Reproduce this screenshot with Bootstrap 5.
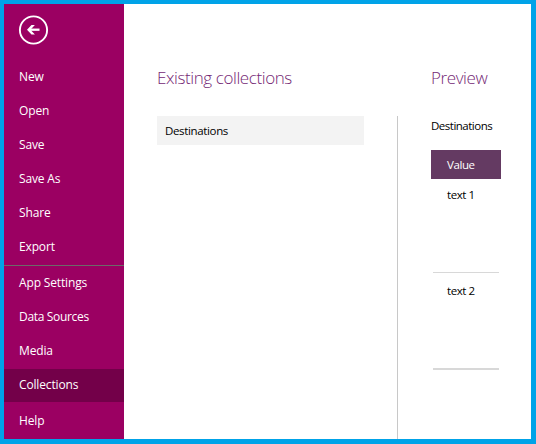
<!DOCTYPE html>
<html lang="en">
<head>
<meta charset="utf-8">
<meta name="viewport" content="width=device-width, initial-scale=1">
<title>Collections</title>
<link href="https://cdn.jsdelivr.net/npm/bootstrap@5.3.0/dist/css/bootstrap.min.css" rel="stylesheet">
<style>
body { font-family: "Open Sans", "Noto Sans", sans-serif; font-size: 12px; line-height: 18px; color: #000; }
.app-frame { height: 444px; border: solid #00a3e8; border-width: 4px 5px 5px 4px; overflow: hidden; }
.side-menu { width: 120px; background: #9b0062; padding-top: 10px; }
.back-btn { margin: 0 0 14px 14px; line-height: 0; width: 32px; height: 32px; }
.side-menu .nav-link { height: 34px; padding: 8px 0 8px 15px; color: #fff; letter-spacing: -.15px; white-space: nowrap; }
.side-menu .nav-link.active { height: 33px; margin: 1px 0 2px; padding-top: 7px; background: #730049; }
.side-menu .nav-link.tight { letter-spacing: -.32px; }
.menu-rule { height: 1px; margin-top: 1px; background: #6c6a68; }
.list-pane { width: 240px; padding: 64px 0 0 33px; }
.preview-pane { width: 100px; padding-top: 64px; }
.pane-title { font-size: 17px; font-weight: 300; line-height: 20px; color: #742774; margin: 0 0 28px; white-space: nowrap; letter-spacing: -.41px; }
.collection-item { height: 29px; padding: 6px 8px 5px; background: #f3f3f3; font-size: 11.5px; letter-spacing: -.35px; }
.pane-rule { width: 1px; margin: 112px 0 0 33px; background: #c8c8c8; }
.preview-title { font-size: 11.5px; margin: 29px 0 15px; letter-spacing: -.5px; }
.value-head { width: 70px; height: 29px; padding: 6px 16px 5px; background: #643a62; color: #fff; font-size: 11.5px; letter-spacing: -.4px; }
.value-row { width: 66px; margin-left: 2px; padding: 7px 0 0 14px; font-size: 11.5px; letter-spacing: -.45px; border-bottom: 1px solid #d8d8d8; }
.row-one { height: 94px; }
.row-two { height: 97px; padding-top: 9px; border-bottom-width: 2px; }
</style>
</head>
<body>
<div class="app-frame d-flex bg-white">
  <nav class="side-menu flex-shrink-0">
    <a href="#" class="back-btn d-block" aria-label="Back">
      <svg width="32" height="32" viewBox="0 0 32 32" fill="none" stroke="#fff"><circle cx="15.5" cy="16" r="13.6" stroke-width="1.9"/><path d="M11 15.7h10.5" stroke-width="2.3"/><path d="M9 15.7 13.5 11h3.4L12.4 15.7l4.5 4.7h-3.4z" fill="#fff" stroke="none"/></svg>
    </a>
    <div class="nav flex-column flex-nowrap">
      <a class="nav-link" href="#">New</a>
      <a class="nav-link" href="#">Open</a>
      <a class="nav-link" href="#">Save</a>
      <a class="nav-link" href="#">Save As</a>
      <a class="nav-link" href="#">Share</a>
      <a class="nav-link" href="#">Export</a>
      <div class="menu-rule"></div>
      <a class="nav-link" href="#">App Settings</a>
      <a class="nav-link tight" href="#">Data Sources</a>
      <a class="nav-link" href="#">Media</a>
      <a class="nav-link active" href="#">Collections</a>
      <a class="nav-link" href="#">Help</a>
    </div>
  </nav>
  <main class="d-flex flex-grow-1">
    <section class="list-pane flex-shrink-0">
      <h1 class="pane-title">Existing collections</h1>
      <div class="collection-item">Destinations</div>
    </section>
    <div class="pane-rule flex-shrink-0"></div>
    <section class="preview-pane flex-shrink-0 ms-auto">
      <h2 class="pane-title">Preview</h2>
      <div class="preview-title">Destinations</div>
      <div class="value-head">Value</div>
      <div class="value-row row-one">text 1</div>
      <div class="value-row row-two">text 2</div>
    </section>
  </main>
</div>
<script src="https://cdn.jsdelivr.net/npm/bootstrap@5.3.0/dist/js/bootstrap.bundle.min.js"></script>
</body>
</html>
